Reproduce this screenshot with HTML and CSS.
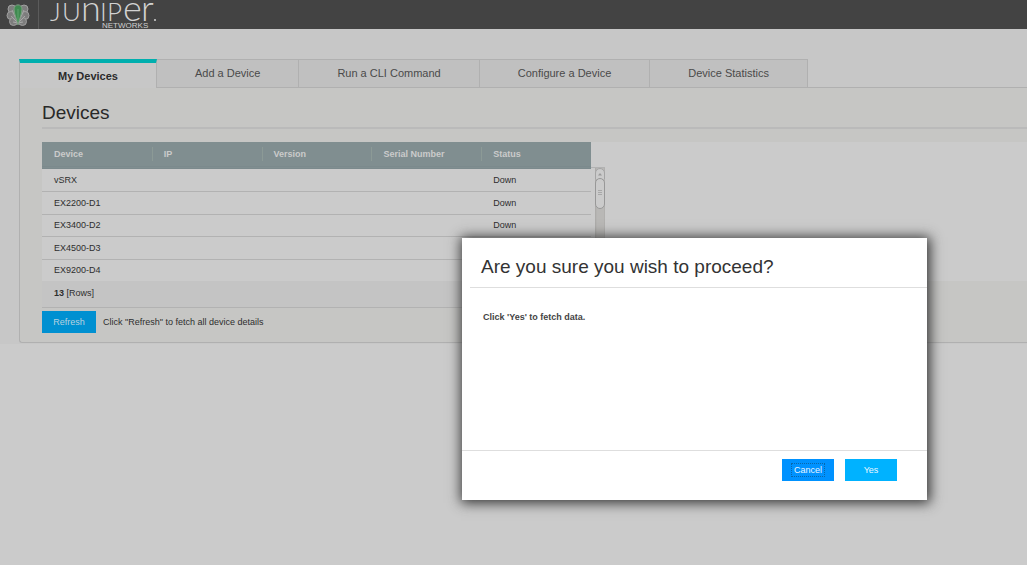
FILE: index.html
```html
<!DOCTYPE html>
<html lang="en">
<head>
<meta charset="utf-8">
<title>Devices</title>
<link rel="stylesheet" href="styles.css">
</head>
<body>
<header class="topbar">
  <svg class="emblem" width="24" height="24" viewBox="0 0 24 24" aria-hidden="true">
    <g fill="#7d7d7d" stroke="#a0a0a0" stroke-width="1">
      <circle cx="6" cy="6" r="4"/><circle cx="18" cy="6" r="4"/>
      <circle cx="5" cy="12.500" r="4"/><circle cx="19" cy="12.500" r="4"/>
      <circle cx="7.500" cy="18.500" r="4"/><circle cx="16.500" cy="18.500" r="4"/>
    </g>
    <ellipse cx="12" cy="13" rx="6" ry="8" fill="#848484"/>
    <path d="M12 20L6 7M12 20L18 7M12 20L5 13M12 20L19 13M12 20L7 19M12 20L17 19" stroke="#a8a8a8" stroke-width="1" fill="none"/>
    <path d="M12 22C11 17 8 11 8 6C8 .5 16 .5 16 6C16 11 13 17 12 22Z" fill="#3f8a50" stroke="#7f9f84"/>
    <path d="M12 18V6" stroke="#5fa46c"/>
  </svg>
  <svg class="wordmark" width="110" height="29" viewBox="0 0 110 29" role="img" aria-label="Juniper Networks">
    <g class="wordmark-name">
      <text x="0" y="21">J</text><text x="12" y="21">U</text><text class="tall" x="31" y="21">n</text>
      <text x="50" y="21">I</text><text x="57" y="21">P</text><text class="tall" x="73" y="21">e</text><text class="tall" x="91" y="21">r</text>
    </g>
    <circle cx="105" cy="20" r="1" fill="#d2d2d2"/>
    <text class="wordmark-sub" x="52" y="28">NETWORKS</text>
  </svg>
</header>
<main class="page">
  <nav class="tabs">
    <a class="tab tab-active" href="#devices">My Devices</a>
    <a class="tab" href="#add">Add a Device</a>
    <a class="tab" href="#cli">Run a CLI Command</a>
    <a class="tab" href="#configure">Configure a Device</a>
    <a class="tab" href="#statistics">Device Statistics</a>
  </nav>
  <section class="panel" id="devices">
    <h1 class="panel-title">Devices</h1>
    <div class="grid">
      <table class="device-table">
        <thead>
          <tr><th><span>Device</span></th><th><span>IP</span></th><th><span>Version</span></th><th><span>Serial Number</span></th><th><span>Status</span></th></tr>
        </thead>
        <tbody>
          <tr><td>vSRX</td><td></td><td></td><td></td><td>Down</td></tr>
          <tr><td>EX2200-D1</td><td></td><td></td><td></td><td>Down</td></tr>
          <tr><td>EX3400-D2</td><td></td><td></td><td></td><td>Down</td></tr>
          <tr><td>EX4500-D3</td><td></td><td></td><td></td><td></td></tr>
          <tr><td>EX9200-D4</td><td></td><td></td><td></td><td></td></tr>
        </tbody>
      </table>
      <div class="scroller">
        <svg class="scroll-art" width="10" height="42" viewBox="0 0 10 42" aria-hidden="true">
          <path d="M.5 11V5a4.500 4.500 0 0 1 9 0v6" fill="#cbcbcb" stroke="#a4a4a4"/>
          <path d="M3 7.500L5 5l2 2.500z" fill="#9a9a9a"/>
          <rect x=".5" y="10.500" width="9" height="30" rx="4.500" fill="#cbcbcb" stroke="#989898"/>
          <path d="M3 22.500h4M3 24.500h4M3 26.500h4" stroke="#a8a8a8"/>
        </svg>
      </div>
    </div>
    <p class="row-count"><b>13</b> [Rows]</p>
    <div class="actions">
      <button class="button button-refresh" type="button">Refresh</button>
      <span>Click "Refresh" to fetch all device details</span>
    </div>
  </section>
</main>
<div class="dialog" role="dialog" aria-labelledby="dialog-title">
  <h2 class="dialog-title" id="dialog-title">Are you sure you wish to proceed?</h2>
  <p class="dialog-text">Click 'Yes' to fetch data.</p>
  <div class="dialog-actions">
    <button class="button button-cancel" type="button"><span>Cancel</span></button>
    <button class="button button-yes" type="button">Yes</button>
  </div>
</div>
</body>
</html>
```
FILE: styles.css
```css
* { box-sizing: border-box; }
body {
  margin: 0;
  min-height: 100vh;
  background: #cbcbcb;
  color: #2e2e2e;
  font: 9px/12px "Liberation Sans", Arial, sans-serif;
}
.topbar {
  display: flex;
  height: 29px;
  background: #434343;
}
.emblem { margin: 3px 8px 0 6px; }
.wordmark {
  padding-left: 11px;
  border-left: 1px solid #5b5b5b;
  box-sizing: content-box;
}
.wordmark-name { fill: #d2d2d2; font: 300 26px Lato, sans-serif; }
.tall { font-size: 36px; }
.wordmark-sub { fill: #cfcfcf; font: 8px "Liberation Sans", Arial, sans-serif; }
.page {
  padding: 30px 0 1px 19px;
  background: #c7c7c7;
}
.tabs {
  display: flex;
  height: 29px;
  border-bottom: 1px solid #b0b0b0;
}
.tab {
  height: 29px;
  padding: 6px 38px;
  border: 1px solid #b0b0b0;
  border-left-width: 0;
  background: #c0c0c0;
  color: #4a4a4a;
  font-size: 11px;
  line-height: 14px;
  text-decoration: none;
  white-space: nowrap;
}
.tab-active {
  border: 1px solid #b0b0b0;
  border-top: 4px solid #00afae;
  border-bottom: 0;
  background: #c7c7c7;
  color: #2b2b2b;
  font-weight: bold;
}
.panel {
  border: solid #b0b0b0;
  border-width: 0 0 1px 1px;
  border-bottom-left-radius: 3px;
  padding: 14px 0 9px 22px;
  background: #c6c6c4;
}
.panel-title {
  margin: 0 0 13px;
  padding-bottom: 3px;
  border-bottom: 2px solid #bababa;
  color: #292929;
  font-size: 19px;
  font-weight: normal;
  line-height: 22px;
}
.grid {
  display: flex;
  background: #cbcbcb;
}
.device-table {
  width: 549px;
  table-layout: fixed;
  border-collapse: separate;
  border-spacing: 0;
}
th {
  height: 27px;
  padding: 0;
  border-bottom: 3px double #7c8a8d;
  background: #808e90;
  color: #cbcbcb;
  text-align: left;
}
th span {
  display: block;
  padding-left: 12px;
  line-height: 14px;
}
th + th span { padding-left: 11px; border-left: 1px solid #8c9a96; }
td {
  height: 23px;
  padding: 0 12px 1px;
  border-bottom: 1px solid #b2b2b2;
}
tr:nth-child(3) td { height: 22px; }
tr:last-child td { height: 21px; border-bottom: 0; }
.scroller {
  width: 14px;
  margin-top: 25px;
  padding-left: 4px;
  border-top: 1px solid #b2b2b2;
  background: linear-gradient(to right, #cbcbcb 4px, #a9a8a6 4px, #b9b8b6 6px, #b9b8b6 13px, #a9a8a6 14px);
}
.scroll-art { display: block; }
.row-count {
  width: 563px;
  margin: 0 0 3px;
  padding: 6px 12px 8px;
  border-bottom: 1px solid #b2b2b2;
  background: #c4c4c4;
}
.actions {
  display: flex;
  align-items: center;
  gap: 7px;
}
.button {
  height: 22px;
  padding: 0;
  border: 0;
  color: #e9f6ff;
  font: 9px/12px "Liberation Sans", Arial, sans-serif;
}
.button-refresh { width: 54px; background: #0090d1; color: #b9d2df; }
.dialog {
  position: absolute;
  top: 238px;
  right: 100px;
  width: 465px;
  background: #fff;
  box-shadow: 1px 1px 12px 2px #333;
}
.dialog-title {
  margin: 0 0 0 8px;
  padding: 18px 11px 9px;
  border-bottom: 1px solid #dedede;
  color: #333;
  font-size: 19px;
  font-weight: normal;
  line-height: 22px;
}
.dialog-text {
  min-height: 162px;
  margin: 0;
  padding: 23px 21px;
  color: #444;
  font-weight: bold;
}
.dialog-actions {
  display: flex;
  justify-content: flex-end;
  gap: 11px;
  padding: 8px 30px 19px;
  border-top: 1px solid #dedede;
}
.button-cancel, .button-yes { width: 52px; }
.button-cancel { background: #0092ff; }
.button-cancel span { padding: 1px 2px; outline: 1px dotted #0868ab; }
.button-yes { background: #00b2ff; }
```
